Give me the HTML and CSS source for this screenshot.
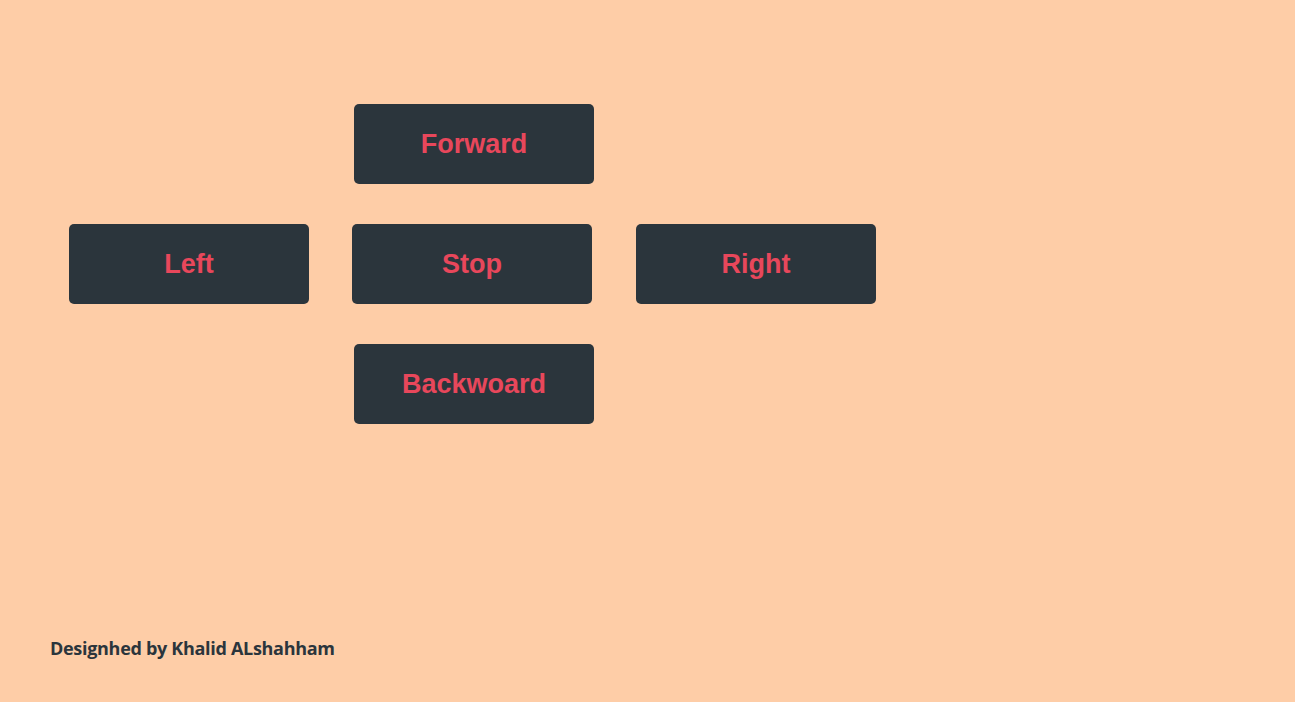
FILE: index.html
```html
<!DOCTYPE html>
<html lang="en">
<head>
    <meta charset="UTF-8">
    <meta name="viewport" content="width=device-width, initial-scale=1.0">
    <title>Car Control</title>
    <link rel="stylesheet" href="styles.css">
</head>
<body>
    <div class="controls">
        <div class="row row-center">
            <button class="btn">Forward</button>
        </div>
        <div class="row row-middle">
            <button class="btn">Left</button>
            <button class="btn btn-stop">Stop</button>
            <button class="btn btn-right">Right</button>
        </div>
        <div class="row row-center">
            <button class="btn">Backwoard</button>
        </div>
    </div>

    <footer class="credit">Designhed by Khalid ALshahham</footer>
</body>
</html>
```

FILE: styles.css
```css
body {
    margin: 0;
    background-color: #fecda7;
    font-family: 'Liberation Sans', Arial, sans-serif;
    height: 702px;
    position: relative;
}
.controls {
    padding-top: 104px;
    display: flex;
    flex-direction: column;
    gap: 40px;
}
.row {
    display: flex;
}
.row-center {
    padding-left: 354px;
}
.row-middle {
    padding-left: 69px;
}
.btn {
    width: 240px;
    height: 80px;
    background-color: #2b353c;
    color: #e8475b;
    border: none;
    border-radius: 5px;
    font-family: 'Liberation Sans', Arial, sans-serif;
    font-size: 27px;
    font-weight: bold;
    cursor: pointer;
    padding: 0;
}
.btn-stop {
    margin-left: 43px;
}
.btn-right {
    margin-left: 44px;
}
.credit {
    position: absolute;
    left: 50px;
    top: 636px;
    color: #2b353c;
    font-family: 'Open Sans', sans-serif;
    font-weight: bold;
    font-size: 18px;
    letter-spacing: -0.3px;
}
```
